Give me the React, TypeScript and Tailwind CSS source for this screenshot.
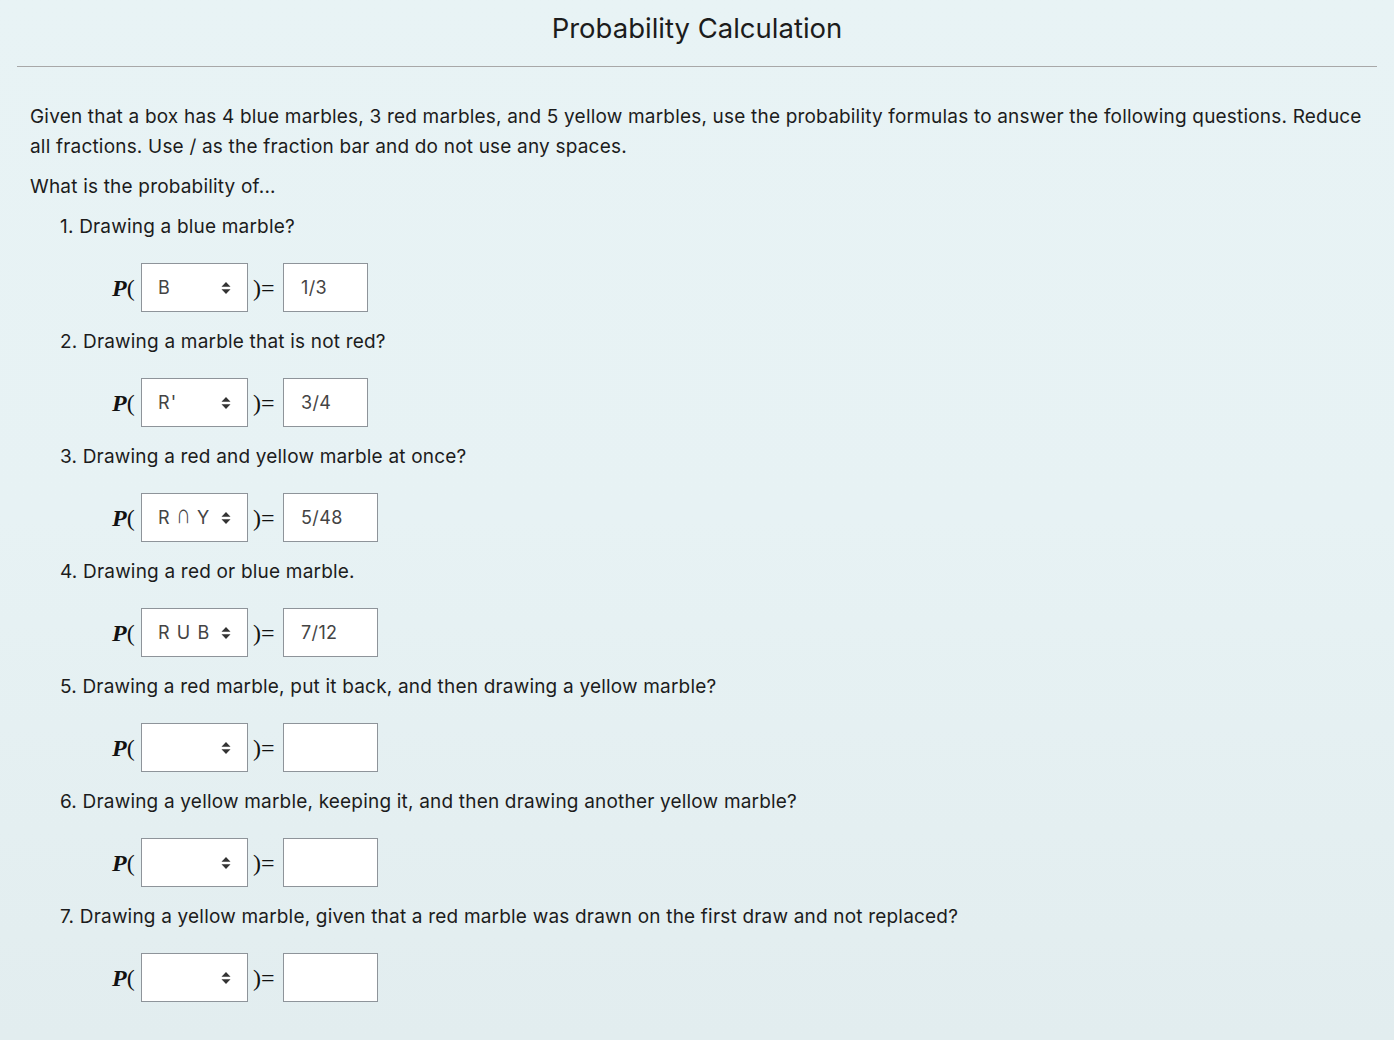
import React from "react";

const Arrows = () => (
  <svg width="10" height="14" viewBox="0 0 10 14" className="shrink-0">
    <path d="M5 1 L9.5 5.8 L0.5 5.8 Z" fill="#333" />
    <path d="M5 13 L9.5 8.2 L0.5 8.2 Z" fill="#333" />
  </svg>
);

type Q = { n: number; text: string; sel: React.ReactNode; ans: string; w: string };

const Cap = () => (
  <span
    className="inline-block origin-bottom scale-x-110 scale-y-150 text-[18px] font-light leading-none"
    style={{ fontFamily: "'Liberation Sans', sans-serif" }}
  >
    ∩
  </span>
);

const questions: Q[] = [
  { n: 1, text: "Drawing a blue marble?", sel: "B", ans: "1/3", w: "w-[85px]" },
  { n: 2, text: "Drawing a marble that is not red?", sel: "R'", ans: "3/4", w: "w-[85px]" },
  { n: 3, text: "Drawing a red and yellow marble at once?", sel: <>R <Cap /> Y</>, ans: "5/48", w: "w-[95px]" },
  { n: 4, text: "Drawing a red or blue marble.", sel: "R U B", ans: "7/12", w: "w-[95px]" },
  { n: 5, text: "Drawing a red marble, put it back, and then drawing a yellow marble?", sel: "", ans: "", w: "w-[95px]" },
  { n: 6, text: "Drawing a yellow marble, keeping it, and then drawing another yellow marble?", sel: "", ans: "", w: "w-[95px]" },
  { n: 7, text: "Drawing a yellow marble, given that a red marble was drawn on the first draw and not replaced?", sel: "", ans: "", w: "w-[95px]" },
];

export default function App() {
  return (
    <div
      className="min-h-[1040px] w-full bg-gradient-to-b from-[#e8f3f5] via-[#e7f2f4] to-[#e2edef] text-[#1c1c1c]"
      style={{ fontFamily: "Inter, 'Noto Sans', sans-serif" }}
    >
      <h1 className="h-[56px] pt-[6px] text-center text-[27.5px] leading-[44px] font-normal text-[#1c1c1c]">
        Probability Calculation
      </h1>
      <div className="mx-[17px] mt-[10px] h-px bg-[#a8a8a8]" />
      <div className="px-[30px] pt-[35px] text-[19px] leading-[30px] tracking-[0.01em]">
        <p>
          Given that a box has 4 blue marbles, 3 red marbles, and 5 yellow marbles, use the probability formulas to answer the following questions. Reduce all fractions. Use / as the fraction bar and do not use any spaces.
        </p>
        <p className="mt-[10px]">What is the probability of...</p>
        <ol className="mt-[10px] pl-[30px]">
          {questions.map((q) => (
            <li key={q.n} className="mb-[15px]">
              <div>
                {q.n}. {q.text}
              </div>
              <div className="mt-[21px] ml-[52px] flex h-[49px] items-center tracking-normal">
                <span
                  className="w-[29px] text-[24px] leading-none text-[#111]"
                  style={{ fontFamily: "'Liberation Serif', serif" }}
                >
                  <i className="font-semibold">P</i>(
                </span>
                <div className="flex h-[49px] w-[107px] items-center justify-between border border-[#8e949a] bg-white pl-[16px] pr-[16px] text-[18px] tracking-[0.06em] text-[#444]">
                  <span className="whitespace-pre">{q.sel}</span>
                  <Arrows />
                </div>
                <span
                  className="ml-[5px] w-[30px] text-[24px] leading-none text-[#111]"
                  style={{ fontFamily: "'Liberation Serif', serif" }}
                >
                  )=
                </span>
                <div
                  className={`flex h-[49px] ${q.w} items-center border border-[#8e949a] bg-white pl-[17px] text-[18px] tracking-[0.02em] text-[#444]`}
                >
                  {q.ans}
                </div>
              </div>
            </li>
          ))}
        </ol>
      </div>
    </div>
  );
}
